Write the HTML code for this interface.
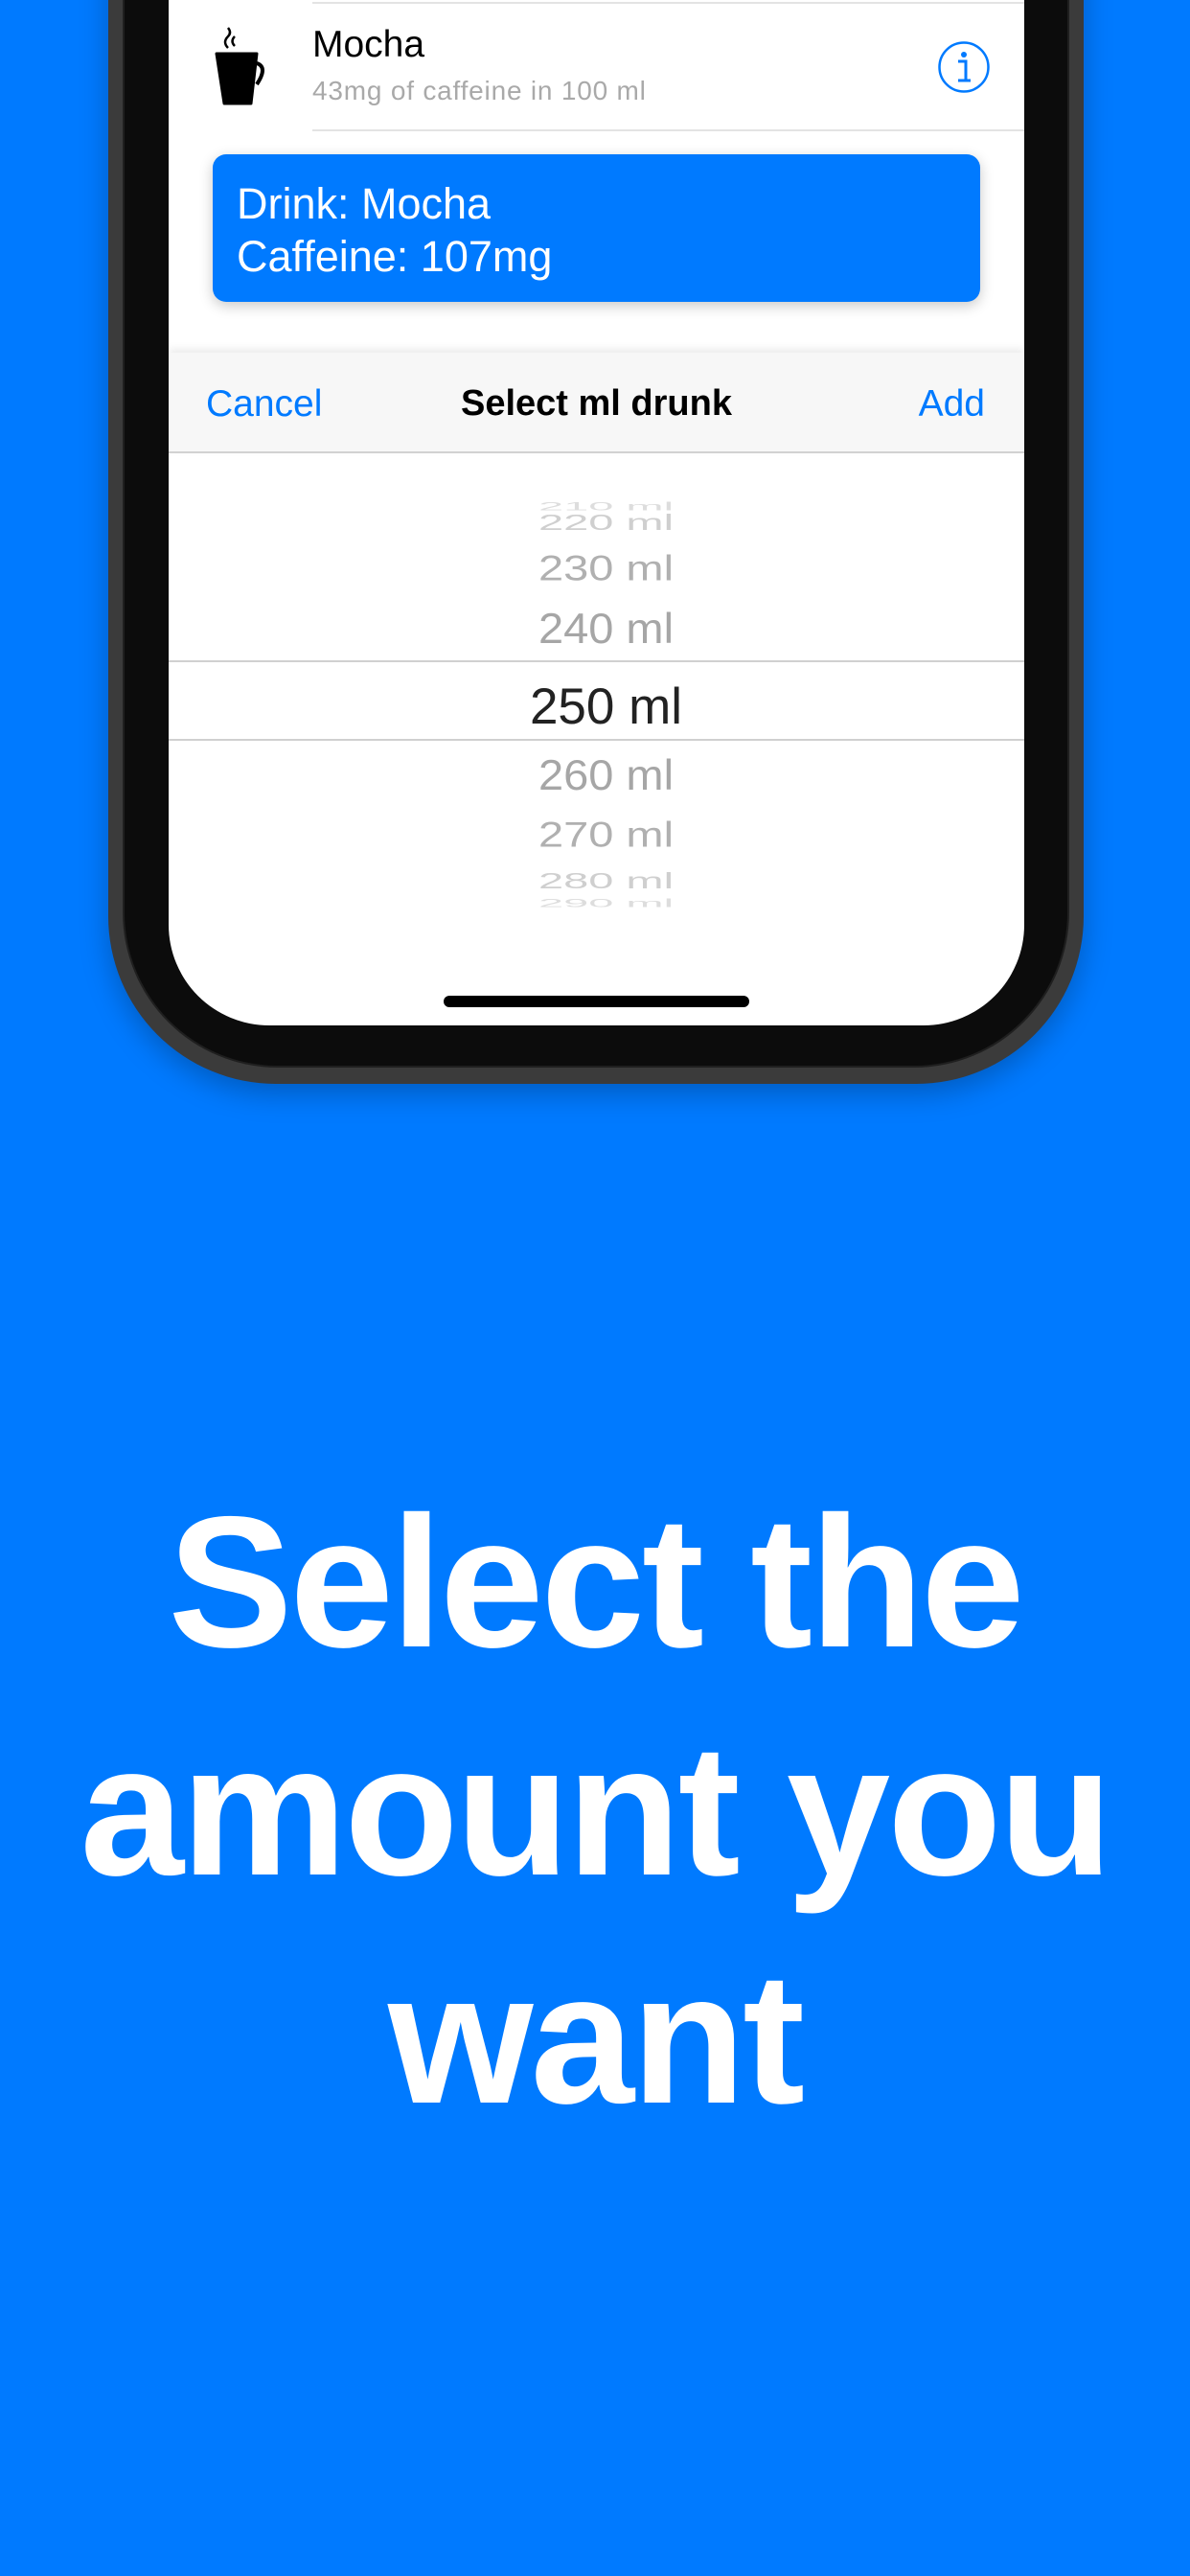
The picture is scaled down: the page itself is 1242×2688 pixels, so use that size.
<!DOCTYPE html>
<html><head><meta charset="utf-8"><style>
*{margin:0;padding:0;box-sizing:border-box}
body{width:1242px;height:2688px;background:#007AFF;position:relative;overflow:hidden;font-family:"Liberation Sans",sans-serif}
.abs{position:absolute}
.rim{left:113px;top:-300px;width:1018px;height:1431px;border-radius:0 0 175px 175px;background:#3b3b3b;box-shadow:0 10px 30px rgba(0,0,0,0.25)}
.bez{left:128px;top:-300px;width:988px;height:1414px;border-radius:0 0 162px 162px;background:#0c0c0c;border:2px solid #1f1f1f;border-top:none}
.scr{left:176px;top:-300px;width:893px;height:1370px;border-radius:0 0 105px 105px;background:#fff;overflow:hidden}
.t{position:absolute;white-space:nowrap}
.pk{position:absolute;left:10px;width:893px;text-align:center;font-size:47px;color:#a6a6a6;line-height:1}
</style></head><body>
<div class="abs rim"></div>
<div class="abs bez"></div>
<div class="abs scr">
  <div class="abs" style="left:150px;top:302px;width:743px;height:2px;background:#e3e3e3"></div>
  <svg class="abs" style="left:48px;top:328px" width="60" height="82" viewBox="0 0 60 82">
    <path d="M14 22 q-6 -6 0 -12 q4 -4 0 -9 M21 20 q-5 -5 0 -10" stroke="#000" stroke-width="2.5" fill="none"/>
    <path d="M2 28 L44 28 L38 80 L10 80 Z" fill="#000" stroke="#000" stroke-width="3" stroke-linejoin="round"/>
    <path d="M44 38 q12 4 0 22" stroke="#000" stroke-width="4" fill="none"/>
  </svg>
  <div class="t" style="left:150px;top:325px;font-size:39px;color:#000">Mocha</div>
  <div class="t" style="left:150px;top:379px;font-size:28px;color:#a9a9a9;letter-spacing:0.8px">43mg of caffeine in 100 ml</div>
  <svg class="abs" style="left:802px;top:342px" width="56" height="56" viewBox="0 0 56 56">
    <circle cx="28" cy="28" r="25.5" stroke="#007AFF" stroke-width="2.5" fill="none"/>
    <circle cx="28" cy="15" r="3" fill="#007AFF"/>
    <path d="M22 22 H30 V42 M22 42 H35" stroke="#007AFF" stroke-width="3" fill="none"/>
  </svg>
  <div class="abs" style="left:150px;top:435px;width:743px;height:2px;background:#e3e3e3"></div>
  <div class="abs" style="left:46px;top:461px;width:801px;height:154px;border-radius:14px;background:#007AFF;box-shadow:0 4px 14px rgba(0,0,0,0.22)"></div>
  <div class="t" style="left:71px;top:487px;font-size:45px;color:#fff">Drink: Mocha</div>
  <div class="t" style="left:71px;top:542px;font-size:45px;color:#fff">Caffeine: 107mg</div>
  <div class="abs" style="left:0;top:668px;width:893px;height:105px;background:#f7f7f7;box-shadow:0 -4px 8px rgba(0,0,0,0.08);border-bottom:2px solid #d2d2d2"></div>
  <div class="t" style="left:39px;top:700px;font-size:39px;color:#007AFF">Cancel</div>
  <div class="t" style="left:0;width:893px;text-align:center;top:700px;font-size:38px;color:#000;font-weight:bold">Select ml drunk</div>
  <div class="t" style="right:41px;top:700px;font-size:39px;color:#007AFF">Add</div>
  <div class="abs" style="left:0;top:815px;width:893px;height:433px;overflow:hidden">
    <div class="pk" style="top:-10px;transform:scaleY(0.25);color:#ddd">210 ml</div>
    <div class="pk" style="top:6px;transform:scaleY(0.5);color:#cfcfcf">220 ml</div>
    <div class="pk" style="top:54px;transform:scaleY(0.78);color:#b0b0b0">230 ml</div>
    <div class="pk" style="top:117px;transform:scaleY(0.95)">240 ml</div>
    <div class="pk" style="font-size:53px;color:#222;top:196px">250 ml</div>
    <div class="pk" style="top:270px;transform:scaleY(0.95)">260 ml</div>
    <div class="pk" style="top:332px;transform:scaleY(0.78);color:#b0b0b0">270 ml</div>
    <div class="pk" style="top:380px;transform:scaleY(0.5);color:#cfcfcf">280 ml</div>
    <div class="pk" style="top:404px;transform:scaleY(0.25);color:#ddd">290 ml</div>
  </div>
  <div class="abs" style="left:0;top:989px;width:893px;height:2px;background:#d0d0d0"></div>
  <div class="abs" style="left:0;top:1071px;width:893px;height:2px;background:#d0d0d0"></div>
  <div class="abs" style="left:287px;top:1339px;width:319px;height:12px;border-radius:6px;background:#000"></div>
</div>
<div class="t" style="left:0;width:1242px;text-align:center;top:1532px;font-size:195px;line-height:238px;color:#fff;font-weight:bold;letter-spacing:-3px">Select the<br>amount you<br>want</div>
</body></html>
